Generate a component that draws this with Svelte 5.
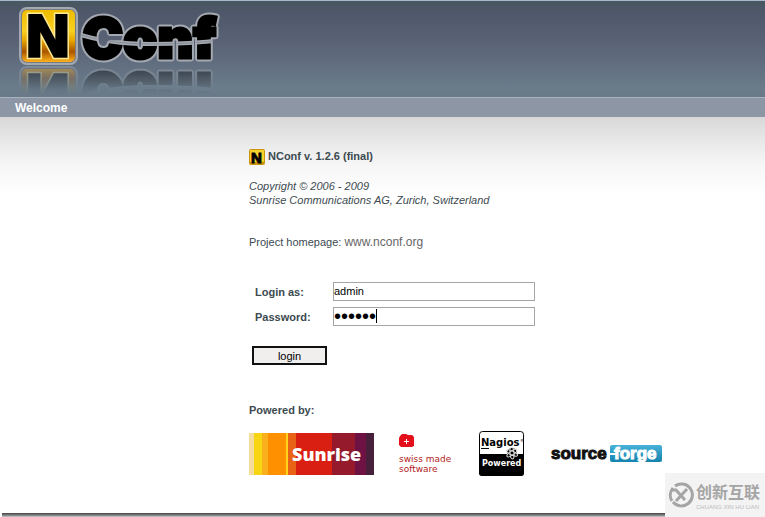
<script>
  let user = $state('admin');
  let password = $state('secret');
  const stripes = [
    ['#f3dc9c', 0, 5], ['#f7d512', 5, 8], ['#f9b01c', 13, 6], ['#ff9100', 19, 18],
    ['#ffd21c', 37, 2], ['#e96316', 39, 8], ['#d91e12', 47, 36], ['#951a2c', 83, 23],
    ['#6d1242', 106, 11], ['#47203c', 117, 8]
  ];
</script>

<div class="page">
  <header>
    <svg class="logo" width="230" height="96" viewBox="0 0 230 96" role="img" aria-label="NConf">
      <defs>
        <linearGradient id="gold" x1="0" y1="0" x2="0" y2="1">
          <stop offset="0" stop-color="#eebb00" />
          <stop offset=".4" stop-color="#f9d020" />
          <stop offset=".58" stop-color="#e9a800" />
          <stop offset=".8" stop-color="#a95500" />
          <stop offset="1" stop-color="#ffb21c" />
        </linearGradient>
        <linearGradient id="fade" x1="0" y1="66" x2="0" y2="94" gradientUnits="userSpaceOnUse">
          <stop offset="0" stop-color="#fff" stop-opacity=".45" />
          <stop offset=".8" stop-color="#fff" stop-opacity=".05" />
          <stop offset="1" stop-color="#fff" stop-opacity="0" />
        </linearGradient>
        <mask id="mirror" maskUnits="userSpaceOnUse" x="0" y="65" width="230" height="31">
          <rect y="65" width="230" height="31" fill="url(#fade)" />
        </mask>
        <mask id="word" maskUnits="userSpaceOnUse" x="0" y="0" width="230" height="66">
          <text class="word shape" x="82" y="57">Conf</text>
        </mask>
      </defs>
      <g id="brand">
        <rect x="20" y="7" width="57" height="56" rx="7" fill="#777b83" stroke="#a4a8b0" stroke-width="2" />
        <rect x="22" y="9" width="53" height="52" rx="5" fill="url(#gold)" />
        <text class="tile edge" x="24" y="56">N</text>
        <text class="tile" x="24" y="56">N</text>
        <text class="word halo" x="82" y="57">Conf</text>
        <text class="word" x="82" y="57">Conf</text>
        <g mask="url(#word)" fill="none">
          <path d="M78 33Q108 43 150 43T222 39" stroke="#a4a8b0" stroke-width="4" />
          <path d="M78 33Q108 43 150 43T222 39" stroke="#858b96" />
        </g>
      </g>
      <g mask="url(#mirror)"><use href="#brand" transform="matrix(1 0 0 -1 0 129)" /></g>
    </svg>
  </header>
  <nav>Welcome</nav>
  <main>
    <h1>
      <svg width="16" height="16" viewBox="0 0 16 16" aria-hidden="true">
        <rect width="16" height="16" rx="2" fill="#c9950f" />
        <rect x="1" y="1" width="14" height="12" rx="1" fill="#f5d22c" />
        <text x="2" y="14" class="mini">N</text>
      </svg>
      <span>NConf v. 1.2.6 (final)</span>
    </h1>
    <p class="copy">Copyright © 2006 - 2009<br />Sunrise Communications AG, Zurich, Switzerland</p>
    <p class="home">Project homepage: <a href="#home">www.nconf.org</a></p>
    <form onsubmit={(e) => e.preventDefault()}>
      <div class="row">
        <label for="user">Login as:</label>
        <input id="user" type="text" bind:value={user} />
      </div>
      <div class="row">
        <label for="pass">Password:</label>
        <span class="field"><input id="pass" type="password" bind:value={password} /><i class="caret"></i></span>
      </div>
      <button type="submit">login</button>
    </form>
    <h2>Powered by:</h2>
    <div class="sponsors">
      <svg class="sunrise" width="125" height="42" viewBox="0 0 125 42">
        {#each stripes as [fill, x, width]}
          <rect {x} {width} height="42" {fill} />
        {/each}
        <text x="43" y="28">Sunrise</text>
      </svg>
      <div class="swiss">
        <svg width="16" height="14" viewBox="0 0 16 14" aria-hidden="true">
          <path d="M1 2L3 0H7L9 1H13L15 3V12L13 13H2L0 11V4Z" fill="#e3101c" />
          <path d="M5 7.5H10M7.5 5V10" stroke="#fff" />
        </svg>
        <span>swiss made<br />software</span>
      </div>
      <svg class="nagios" width="45" height="45" viewBox="0 0 45 45">
        <rect x=".5" y=".5" width="44" height="44" rx="3" fill="#fff" stroke="#000" />
        <path d="M0 23H45V42Q45 45 42 45H3Q0 45 0 42Z" />
        <text x="2" y="15" class="ntop">Nagios</text>
        <path d="M2 17.5H10" stroke="#000" />
        <text x="41" y="11" class="reg">®</text>
        <circle cx="33" cy="22" r="5" fill="#000" />
        <g fill="none" stroke="#ddd">
          <ellipse cx="33" cy="22" rx="6" ry="2" transform="rotate(25 33 22)" />
          <ellipse cx="33" cy="22" rx="6" ry="2" transform="rotate(85 33 22)" />
          <ellipse cx="33" cy="22" rx="6" ry="2" transform="rotate(145 33 22)" />
        </g>
        <text x="3" y="35" class="nlow">Powered</text>
      </svg>
      <svg class="forge" width="112" height="24" viewBox="0 0 112 24">
        <defs>
          <linearGradient id="blue" x1="0" y1="0" x2="0" y2="1">
            <stop offset="0" stop-color="#48b2d8" /><stop offset="1" stop-color="#1583ae" />
          </linearGradient>
        </defs>
        <rect x="59" y="3" width="52" height="17" rx="2" fill="url(#blue)" />
        <path d="M59 12H66" stroke="#fff" stroke-width="2" />
        <text class="dark" x="0" y="17">source</text>
        <text class="light" x="63" y="17">forge</text>
      </svg>
    </div>
  </main>
  <div class="base"></div>
  <aside>
    <svg width="26" height="26" viewBox="0 0 26 26" fill="none" stroke="#a5a5a5" aria-hidden="true">
      <path d="M7 4A11 11 0 1 1 5 20M5 6A11 11 0 0 0 4 19" stroke-width="3" />
      <path d="M3 8H8L17 18M19 7L8 19" stroke-width="3" />
    </svg>
    <div><b>创新互联</b><small>CHUANG XIN HU LIAN</small></div>
  </aside>
</div>

<style>
  :global(body) { margin: 0; background: #fff; }
  .page {
    position: relative;
    min-height: 100vh;
    box-sizing: border-box;
    display: flex;
    flex-direction: column;
    font: 11px/14px "Liberation Sans", Arial, sans-serif;
    color: #3c4a50;
  }
  header {
    border-top: 1px solid #a6b9cf;
    height: 96px;
    background: linear-gradient(#48575f, #4e586a 12%, #5a6476 45%, #6a7b8a 90%, #6a7988);
  }
  .logo { display: block; }
  .tile { font: bold 57px "DejaVu Sans", sans-serif; stroke: #000; stroke-width: 2; }
  .edge { stroke: #ffe991; stroke-width: 5; }
  .word { font: 900 55px Inter, sans-serif; stroke: #000; stroke-width: 3; }
  .halo { fill: #a4a8b0; stroke: #a4a8b0; stroke-width: 7; stroke-linejoin: round; }
  .shape { fill: #fff; stroke: #fff; stroke-width: 5; }
  nav {
    border-top: 1px solid #a9b3c0;
    background: #8c96a5;
    padding: 3px 15px 2px;
    font-size: 12px;
    font-weight: bold;
    line-height: 14px;
    color: #fff;
  }
  main {
    flex: 1;
    padding: 32px 16px 35px 249px;
    background: linear-gradient(#d8d8d8, #e8e8e8 24px, #f6f6f6 48px, #fff 78px);
  }
  h1, h2, p { margin: 0; font-size: 11px; line-height: 14px; }
  h1 { display: flex; align-items: flex-start; gap: 3px; height: 16px; }
  .mini { font: bold 15px "Liberation Sans", Arial, sans-serif; stroke: #000; }
  .copy { margin-top: 14px; font-style: italic; }
  .home { margin-top: 28px; }
  .home a { color: #666; text-decoration: none; font-size: 12px; }
  form { margin-top: 33px; }
  .row { display: flex; align-items: center; margin-bottom: 6px; }
  label { width: 78px; margin-left: 6px; font-weight: bold; }
  input {
    display: block;
    box-sizing: border-box;
    width: 202px;
    height: 19px;
    border: 1px solid #a5a5a5;
    padding: 0 0 2px;
    background: #fff;
    color: #000;
    font: 11px "Liberation Sans", Arial, sans-serif;
    outline: 0;
  }
  #pass { font-size: 20px; padding-bottom: 0; }
  .field { position: relative; }
  .caret { position: absolute; left: 43px; top: 2px; width: 1px; height: 14px; background: #000; }
  button {
    display: block;
    margin: 20px 0 0 3px;
    width: 75px;
    height: 19px;
    border: 2px solid #111;
    padding: 0;
    background: #f1eeee;
    color: #000;
    font: 11px/14px "Liberation Sans", Arial, sans-serif;
  }
  h2 { margin-top: 38px; }
  .sponsors { display: flex; align-items: center; margin-top: 14px; }
  .sponsors > * { flex: none; }
  .sunrise text { font: 800 18px "Open Sans", sans-serif; fill: #fff; }
  .swiss {
    width: 58px;
    margin-left: 25px;
    color: #b31b24;
    font: 9px/10px "DejaVu Sans", sans-serif;
    white-space: nowrap;
  }
  .swiss svg { display: block; margin-bottom: 6px; }
  .nagios { margin-left: 22px; }
  .ntop { font: bold 10px "DejaVu Sans", sans-serif; }
  .nlow { font: bold 8px "DejaVu Sans", sans-serif; fill: #fff; }
  .reg { font: 4px "DejaVu Sans", sans-serif; }
  .forge { margin-left: 27px; }
  .forge text { font: bold 17px "Liberation Sans", sans-serif; stroke-width: 1; }
  .forge .dark { fill: #111; stroke: #111; }
  .forge .light { fill: #fff; stroke: #fff; }
  .base { height: 4px; background: linear-gradient(#444, #777 50%, #ccc); margin-left: 2px; }
  aside {
    position: absolute;
    right: 0;
    bottom: 0;
    display: flex;
    align-items: center;
    gap: 2px;
    box-sizing: border-box;
    width: 100px;
    height: 44px;
    padding-left: 3px;
    background: #f3f3f3;
    color: #a5a5a5;
  }
  aside b { display: block; font: bold 16px/24px "Noto Sans CJK SC", sans-serif; white-space: nowrap; }
  aside small { display: block; font-size: 6px; line-height: 8px; white-space: nowrap; color: #bbb; }
</style>
